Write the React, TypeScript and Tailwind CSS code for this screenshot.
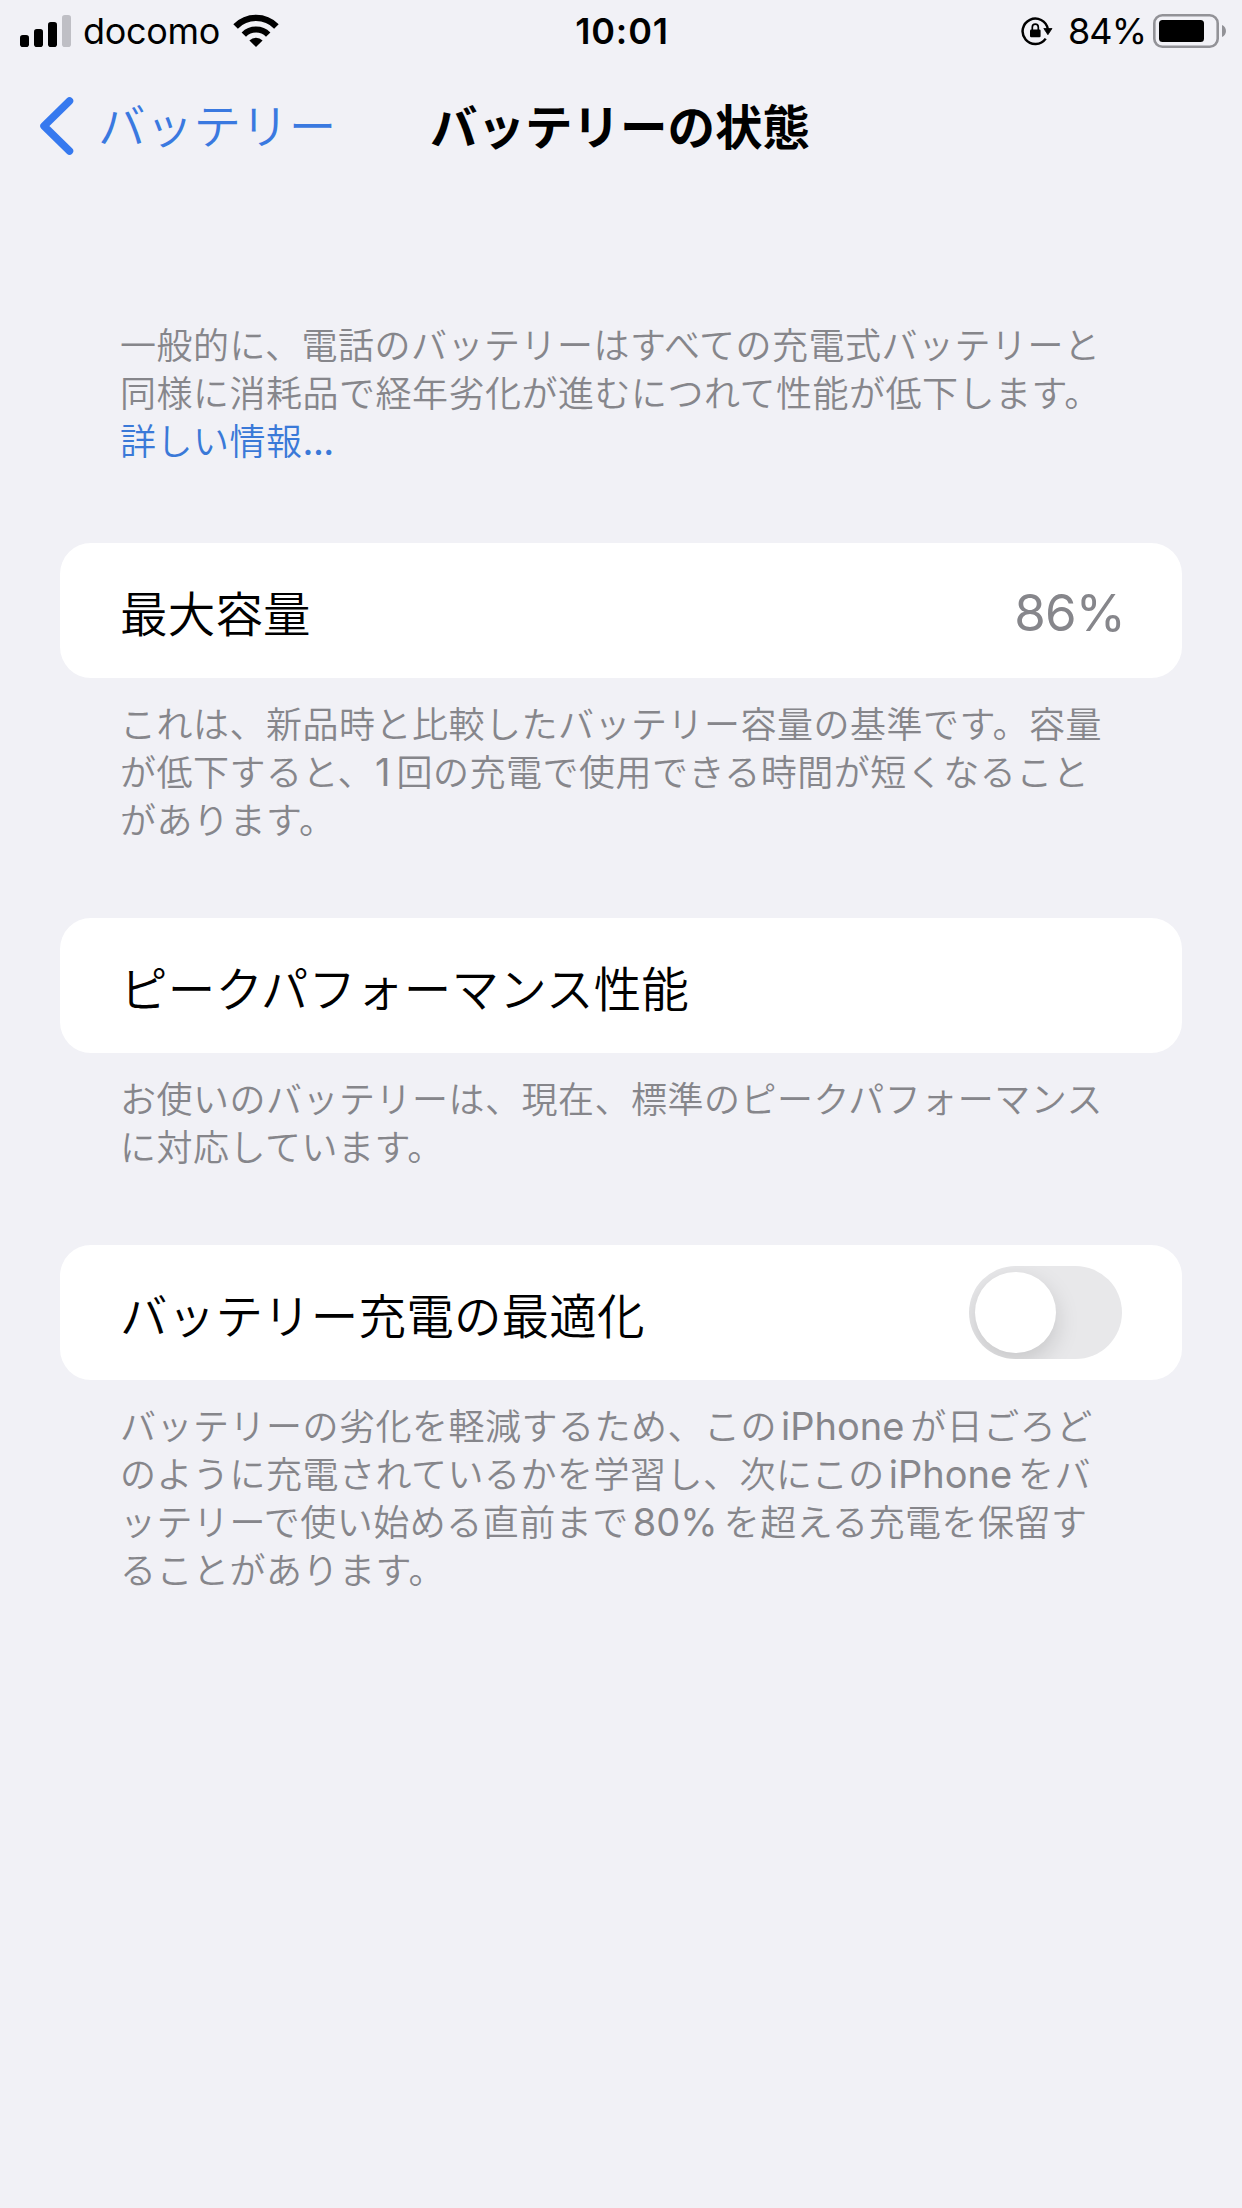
import type { ReactNode } from 'react';

function SignalIcon() {
  return (
    <svg width="52" height="34" viewBox="0 0 52 34">
      <rect x="0" y="21" width="9" height="12" rx="2.8" fill="#000" />
      <rect x="14" y="15" width="9" height="18" rx="2.8" fill="#000" />
      <rect x="28" y="8" width="9" height="25" rx="2.8" fill="#000" />
      <rect x="42" y="1" width="9" height="32" rx="2.8" fill="#bfbfc5" />
    </svg>
  );
}

function WifiIcon() {
  return (
    <svg width="46" height="34" viewBox="0 0 46 34" fill="none" stroke="#000">
      <path d="M2.6 12.4a28.6 28.6 0 0 1 40.8 0" strokeWidth="6.4" />
      <path d="M10.8 20.6a17.2 17.2 0 0 1 24.4 0" strokeWidth="6.2" />
      <path d="M23 33l-6.600-6.600a9.400 9.400 0 0 1 13.200 0z" fill="#000" stroke="none" />
    </svg>
  );
}

function RotationLockIcon() {
  return (
    <svg width="32" height="30" viewBox="0 0 32 30" fill="none" stroke="#000">
      <path d="M24.700 22.600A12.700 12.700 0 1 1 26.800 13" strokeWidth="2.500" />
      <path d="M22.800 12.500H31l-4.100 6.200z" fill="#000" strokeWidth="0.800" strokeLinejoin="round" />
      <rect x="9" y="13.500" width="10.600" height="7.800" rx="1.200" fill="#000" stroke="none" />
      <path d="M11.300 14v-2.800a3 3 0 0 1 6 0V14" strokeWidth="1.700" />
    </svg>
  );
}

function BatteryIcon() {
  return (
    <svg width="74" height="34" viewBox="0 0 74 34">
      <rect x="1.300" y="1.300" width="63.400" height="31.400" rx="8" fill="none" stroke="#929297" strokeWidth="2.600" />
      <rect x="6" y="6" width="45" height="22" rx="3.500" fill="#000" />
      <path d="M69 11c5.300 2 5.300 10 0 12z" fill="#929297" />
    </svg>
  );
}

function StatusBar() {
  return (
    <div className="grid h-[60px] grid-cols-3 items-center pl-5 pr-[15px] text-[36px] leading-[60px]">
      <div className="flex items-center">
        <SignalIcon />
        <span className="ml-[11px] w-[150px] tracking-[-0.3px]">docomo</span>
        <WifiIcon />
      </div>
      <div className="pr-[3px] pt-px text-center font-semibold tracking-[0.8px]">10:01</div>
      <div className="flex items-center justify-end">
        <RotationLockIcon />
        <span className="ml-[15px] mr-[7px] w-[78px] whitespace-nowrap tracking-[-0.9px]">84%</span>
        <BatteryIcon />
      </div>
    </div>
  );
}

function NavBar() {
  return (
    <div className="grid h-[132px] grid-cols-[400px_442px_400px] items-center text-[47.5px]">
      <div className="flex items-center pl-[39px] text-[#3a79e0]">
        <svg width="35" height="58" viewBox="0 0 35 58" fill="none">
          <path d="M30.500 4L5 29l25.500 25" stroke="#3679ef" strokeWidth="7.500" strokeLinecap="round" strokeLinejoin="round" />
        </svg>
        <span className="ml-6 whitespace-nowrap pt-0.5 font-[350] tracking-[0.2px]">バッテリー</span>
      </div>
      <h1 className="whitespace-nowrap pr-0.5 pt-[3px] text-center font-bold">バッテリーの状態</h1>
    </div>
  );
}

function Card({ label, children }: { label: string; children?: ReactNode }) {
  return (
    <div className="mx-[60px] flex h-[135px] items-center justify-between rounded-[31px] bg-white px-[60px]">
      <span className="pt-2 text-[47.5px] font-[350] leading-[60px] tracking-[0.2px]">{label}</span>
      {children}
    </div>
  );
}

function Note({ children }: { children: ReactNode }) {
  return (
    <p className="ml-[120px] whitespace-nowrap text-[36px] font-[350] leading-[48px] tracking-[0.5px] text-[#86868b]">
      {children}
    </p>
  );
}

function Latin({ children }: { children: ReactNode }) {
  return <span className="ml-1 mr-[6px] text-[38px] font-normal leading-none tracking-[0px]">{children}</span>;
}

function Toggle() {
  return (
    <button role="switch" aria-checked="false" className="flex h-[93px] w-[153px] items-center overflow-hidden rounded-full bg-[#e8e8ea] p-1.5">
      <span className="size-[81px] rounded-full bg-white shadow-[0_9px_24px_rgba(0,0,0,0.15)]" />
    </button>
  );
}

export default function App() {
  return (
    <div className="h-[2208px] w-[1242px] overflow-hidden bg-[#f1f1f6] font-['Inter','Noto_Sans_CJK_JP',sans-serif] text-black">
      <StatusBar />
      <NavBar />

      <div className="mt-[130px] h-[221px]">
        <Note>
          一般的に、電話のバッテリーはすべての充電式バッテリーと
          <br />
          同様に消耗品で経年劣化が進むにつれて性能が低下します。
          <br />
          <a className="text-[#3a79d8]">詳しい情報<span className="font-medium tracking-[-0.5px]">...</span></a>
        </Note>
      </div>

      <Card label="最大容量">
        <span className="-mr-[3px] pt-[5px] text-[51px] tracking-[-0.8px] text-[#86868b]">86%</span>
      </Card>
      <div className="h-[240px] pt-[23px]">
        <Note>
          これは、新品時と比較したバッテリー容量の基準です。容量
          <br />
          が低下すると、<span className="-ml-[3px]"><Latin>1</Latin></span>回の充電で使用できる時間が短くなること
          <br />
          があります。
        </Note>
      </div>

      <Card label="ピークパフォーマンス性能" />
      <div className="h-[192px] pt-[23px]">
        <Note>
          お使いのバッテリーは、現在、標準のピークパフォーマンス
          <br />
          に対応しています。
        </Note>
      </div>

      <Card label="バッテリー充電の最適化">
        <Toggle />
      </Card>
      <div className="pt-[23px]">
        <Note>
          バッテリーの劣化を軽減するため、この<Latin>iPhone</Latin>が日ごろど
          <br />
          のように充電されているかを学習し、次にこの<Latin>iPhone</Latin>をバ
          <br />
          ッテリーで使い始める直前まで<Latin>80%</Latin>を超える充電を保留す
          <br />
          ることがあります。
        </Note>
      </div>
    </div>
  );
}
